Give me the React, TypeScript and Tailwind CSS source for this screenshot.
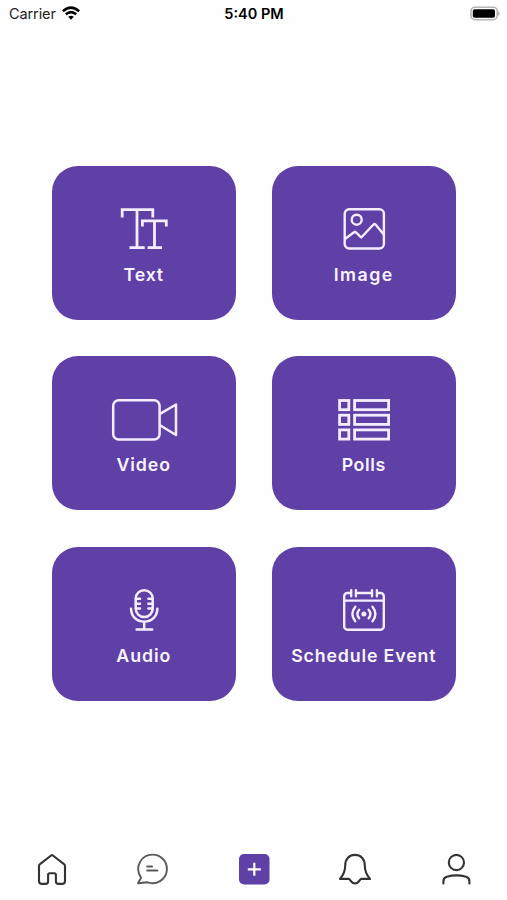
import type { ReactNode } from "react";

const PURPLE = "#5e40a6";

function TextIcon() {
  return (
    <svg width="48" height="44" viewBox="0 0 48 44" fill="none" stroke="#f5edff" strokeWidth="2.8">
      <path d="M2.2 10.5V2.7h30.6v7.8M17 2.7v38M9.5 40.7h15.2" />
      <path d="M22.4 19.5v-5.6h23.9v5.6M34.5 13.9v26.8M27.6 40.7H42" />
    </svg>
  );
}

function ImageIcon() {
  return (
    <svg width="44" height="44" viewBox="0 0 44 44" fill="none" stroke="#f5edff" strokeWidth="2.4" strokeLinejoin="round">
      <rect x="2.7" y="2.3" width="39.2" height="39.2" rx="4.5" />
      <circle cx="14.7" cy="12.7" r="5" />
      <path d="M3 32 12 25.2q1-.8 2 .1l5.2 5.2L31.5 17.5q1-1 2 0l8.5 10.3" />
    </svg>
  );
}

function VideoIcon() {
  return (
    <svg width="68" height="44" viewBox="0 0 68 44" fill="none" stroke="#f5edff" strokeWidth="2.5" strokeLinejoin="round">
      <rect x="3.2" y="2.2" width="46.4" height="39.4" rx="5.5" />
      <path d="M49.6 16.2 66 6.5v30.5L49.6 27" />
    </svg>
  );
}

function PollsIcon() {
  return (
    <svg width="52" height="44" viewBox="0 0 52 44" fill="none" stroke="#f5edff" strokeWidth="2.8">
      {[2.5, 17.2, 31.9].map((y) => (
        <g key={y}>
          <rect x="1.6" y={y} width="9.2" height="9.2" />
          <rect x="16.6" y={y} width="34" height="9.2" />
        </g>
      ))}
    </svg>
  );
}

function AudioIcon() {
  return (
    <svg width="30" height="44" viewBox="0 0 30 44" fill="none" stroke="#f5edff" strokeWidth="2.5" strokeLinecap="round">
      <rect x="6.7" y="2.2" width="17" height="26.8" rx="8.4" />
      <path d="M7 10.8h4M7 15.7h4M7 20.6h4M23.4 10.8h-4M23.4 15.7h-4M23.4 20.6h-4" />
      <path d="M2 20.7c.4 8 5.7 13 13.2 13s12.8-5 13.2-13M15.2 33.7v7.6M7.6 41.5h15.6" />
    </svg>
  );
}

function EventIcon() {
  return (
    <svg width="44" height="44" viewBox="0 0 44 44" fill="none" stroke="#f5edff" strokeWidth="2.4" strokeLinecap="round">
      <path d="M8 5H5.5A3.3 3.3 0 0 0 2.2 8.3V38.4A3.3 3.3 0 0 0 5.5 41.7H38.5A3.3 3.3 0 0 0 41.8 38.4V8.3A3.3 3.3 0 0 0 38.5 5H36M14.5 5h14.5M2.2 12.6h39.6" />
      <path d="M9.2 2.2v6M13.9 2.2v6M30 2.2v6M34.9 2.2v6" />
      <circle cx="21.9" cy="26" r="2.5" fill="#f5edff" stroke="none" />
      <path d="M17.2 21.7q-3.6 4.3 0 8.6M26.6 21.7q3.6 4.3 0 8.6M13.3 18.7q-5.8 7.3 0 14.6M30.5 18.7q5.8 7.3 0 14.6" />
    </svg>
  );
}

const tiles: { label: string; icon: ReactNode; spacing: string }[] = [
  { label: "Text", icon: <TextIcon />, spacing: "tracking-[0.8px]" },
  { label: "Image", icon: <ImageIcon />, spacing: "tracking-[1.5px]" },
  { label: "Video", icon: <VideoIcon />, spacing: "tracking-[0.9px]" },
  { label: "Polls", icon: <PollsIcon />, spacing: "tracking-[0.6px]" },
  { label: "Audio", icon: <AudioIcon />, spacing: "tracking-[0.9px]" },
  { label: "Schedule Event", icon: <EventIcon />, spacing: "tracking-[0.85px]" },
];

function StatusBar() {
  return (
    <header className="grid h-7 grid-cols-3 items-center pr-[7px] pl-[9px] text-[#222]">
      <div className="flex items-center gap-[6px]">
        <span className="text-[14.5px] leading-none tracking-[-0.1px]">Carrier</span>
        <svg className="-mt-[2px]" width="18" height="14" viewBox="0 0 18 14" fill="none" stroke="#000" strokeWidth="2.5">
          <path d="M.9 5.2Q9-2 17.1 5.2M3.8 8.3q5.2-4.4 10.4 0" />
          <path d="m9 13.7-2.8-2.9q2.8-2.2 5.6 0z" fill="#000" stroke="none" />
        </svg>
      </div>
      <span className="pr-px text-center text-[14.5px] leading-none font-semibold text-black">5:40 PM</span>
      <svg className="-mt-[2px] justify-self-end" width="31" height="15" viewBox="0 0 31 15">
        <rect x="2" y="1.2" width="26.2" height="12.5" rx="4" fill="#fff" stroke="#b5b5b5" strokeWidth="1.6" />
        <rect x="3.8" y="3.2" width="22.2" height="8.6" rx="1.8" fill="#000" />
        <path d="M29.2 5v5q3-2.5 0-5" fill="#aaa" />
      </svg>
    </header>
  );
}

function TabBar() {
  return (
    <nav className="grid h-[62px] grid-cols-5 items-center justify-items-center pl-px">
      <svg width="32" height="34" viewBox="0 0 32 34" fill="none" stroke="#333" strokeWidth="2.1" strokeLinejoin="round">
        <path d="M3 14.1q0-1.200 1-1.900L15.100 3.500q.9-.7 1.800 0L28 12.200q1 .7 1 1.900V28.900q0 3-3 3h-3.400q-2.700 0-2.700-2.700v-6.400q0-1.600-1.600-1.600h-4.600q-1.600 0-1.600 1.600v6.400q0 2.700-2.700 2.700H6q-3 0-3-3z" />
      </svg>
      <svg className="mr-[2px]" width="34" height="34" viewBox="0 0 34 34" fill="none" stroke="#5a5a5a" strokeWidth="1.9" strokeLinecap="round" strokeLinejoin="round">
        <path d="M3 31.3 6.1 25.8C-1 15.5 6 2.6 17.6 2.6a14.3 14.3 0 0 1 0 28.6c-2.1 0-3.4-.5-5.1-.9z" />
        <path d="M12.2 14.4h4.800M12.200 18.600h10.200" strokeWidth="2" />
      </svg>
      <svg width="34" height="34" viewBox="0 0 34 34" fill="none">
        <rect x="2" y="2" width="30.5" height="30.5" rx="5" fill={PURPLE} />
        <path d="M17.3 10.8v13M10.8 17.3h13" stroke="#fff" strokeWidth="2.2" />
      </svg>
      <svg width="34" height="34" viewBox="0 0 34 34" fill="none" stroke="#333" strokeWidth="2.1" strokeLinejoin="round">
        <path d="M2 26.9C5.6 22.8 7.2 19.5 7.2 13.4 7.2 6.8 11.3 2.9 17 2.9s9.8 3.9 9.8 10.5c0 6.1 1.6 9.4 5.2 13.5h-8.7c-1.6 0-2.2 4.6-6.3 4.6s-4.7-4.6-6.3-4.6z" />
      </svg>
      <svg width="32" height="34" viewBox="0 0 32 34" fill="none" stroke="#333" strokeWidth="2.1" strokeLinecap="round">
        <circle cx="16.4" cy="10.5" r="7.6" />
        <path d="M3.400 31.500v-2.300q0-3.400 3.400-4.500Q16.400 22 26 24.700q3.400 1.100 3.400 4.500v2.300" />
      </svg>
    </nav>
  );
}

export default function App() {
  return (
    <div className="flex h-[900px] w-[507px] flex-col bg-[#fefefe] font-['Inter',sans-serif]">
      <StatusBar />

      <main className="flex flex-1 justify-center pt-[137.5px] pl-[0.5px]">
        <div className="grid h-fit grid-cols-[183.5px_183.5px] gap-[36.5px]">
          {tiles.map(({ label, icon, spacing }) => (
            <button
              key={label}
              className="flex h-[154px] flex-col items-center rounded-[26px] bg-[#5e40a6] pt-[41.5px] text-[#f8f3ff]"
            >
              {icon}
              <span className={`mt-[11.5px] text-[17.75px] leading-[24px] font-semibold whitespace-nowrap ${spacing}`}>{label}</span>
            </button>
          ))}
        </div>
      </main>

      <TabBar />
    </div>
  );
}
